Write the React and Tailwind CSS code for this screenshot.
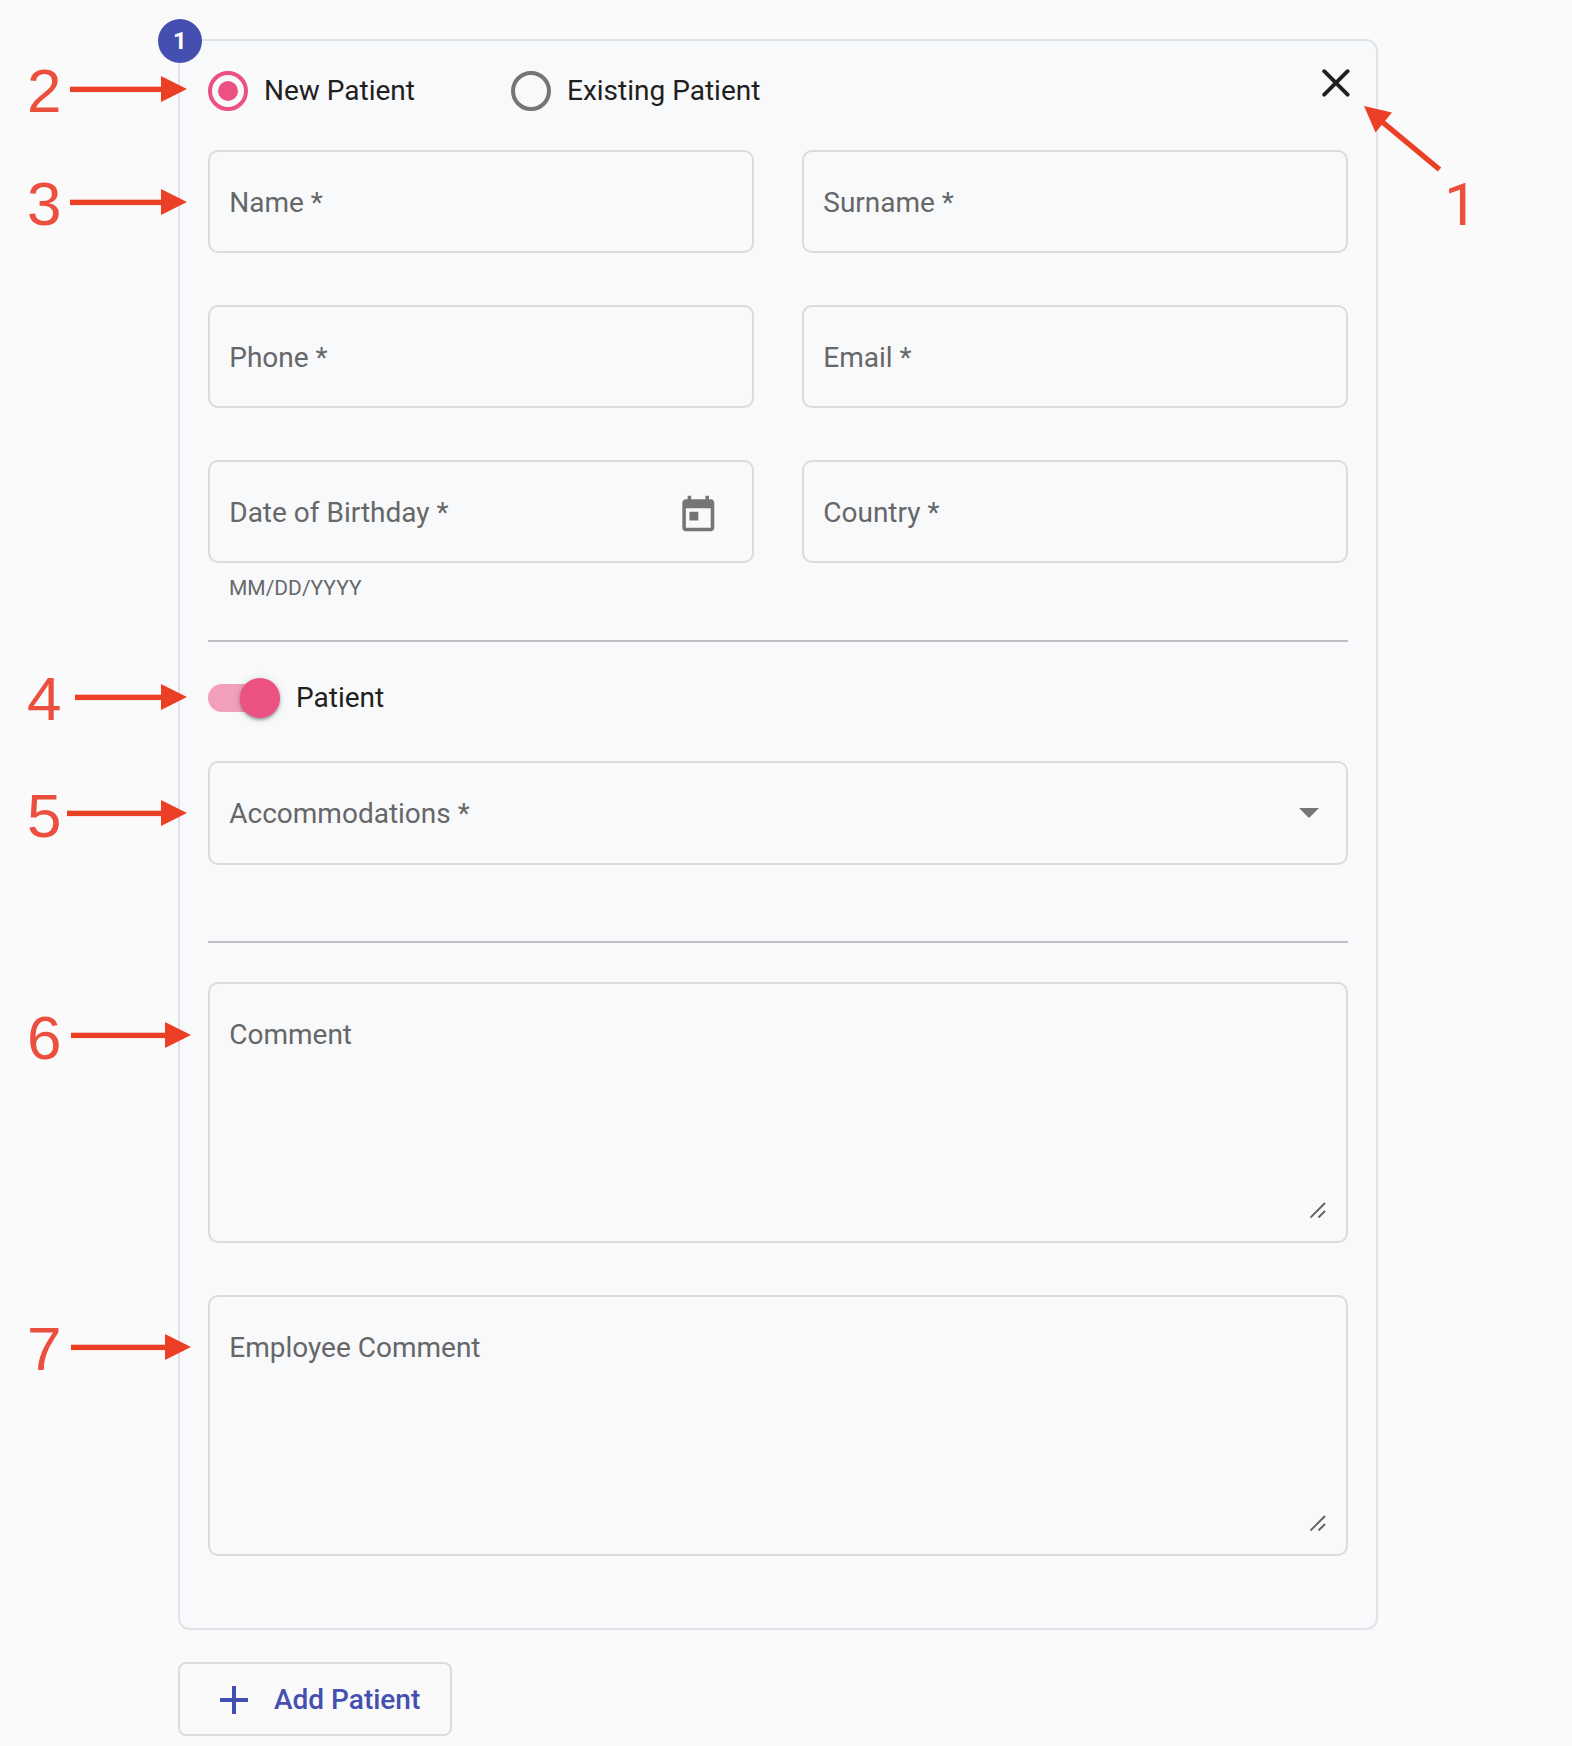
const Divider = ({ className }) => <div className={`h-[2px] bg-[#bfc0c3] ${className}`} />;

function Field({ label, children, className = 'h-[103px] pt-[2px]' }) {
  return (
    <div className={`flex items-center justify-between rounded-[10px] border-2 border-[#dadbdd] pl-[19.25px] text-[#666768] ${className}`}>
      <span className="pt-px leading-8">{label}</span>
      {children}
    </div>
  );
}

function TextArea({ label, className }) {
  return (
    <div className={`flex h-[261px] flex-col justify-between rounded-[10px] border-2 border-[#dadbdd] pl-[19.25px] pr-5 pt-[35px] pb-[23px] text-[#666768] ${className}`}>
      <span className="leading-8">{label}</span>
      <svg className="h-4 w-4 self-end" viewBox="0 0 16 16" fill="none" stroke="#5f6061" strokeWidth="1.9">
        <path d="M0.5 15.5 15 1M8.5 15.5 15 9" />
      </svg>
    </div>
  );
}

const markers = [
  { n: 2, base: 112, y: 89, from: 70, tip: 187 },
  { n: 3, base: 225, y: 202, from: 70, tip: 187 },
  { n: 4, base: 720, y: 697, from: 75, tip: 187 },
  { n: 5, base: 837, y: 813, from: 67, tip: 187 },
  { n: 6, base: 1059, y: 1035, from: 71, tip: 191 },
  { n: 7, base: 1370, y: 1347, from: 71, tip: 191 },
];

function Marker({ n, base, y, from, tip }) {
  return (
    <>
      <span
        className="absolute left-[27px] font-['Liberation_Sans',sans-serif] text-[62px] leading-[62px] text-[#ed4f3f]"
        style={{ top: base - 52.5 }}
      >
        {n}
      </span>
      <svg className="absolute h-7" style={{ left: from, top: y - 14, width: tip - from }} fill="#eb4026">
        <rect y="11.7" width={tip - from - 24} height="5.4" />
        <path d={`M${tip - from - 26} 1 L${tip - from} 14 L${tip - from - 26} 27 Z`} />
      </svg>
    </>
  );
}

export default function App() {
  return (
    <main className="relative h-[1746px] w-[1572px] overflow-hidden bg-[#fafafa] pl-[178px] pt-[39px] font-['Roboto',sans-serif] text-[28px] text-[#1f2020]">
      <section className="relative h-[1591px] w-[1200px] rounded-xl border-2 border-[#dfe2e8] bg-[#f8f9fb] px-7 pt-[30px]">
        <div className="absolute -left-[22px] -top-[22px] flex h-11 w-11 items-center justify-center rounded-full bg-[#444fb0] pb-px text-[24px] font-bold leading-none text-white">
          1
        </div>

        <div className="flex h-10 items-center">
          <div className="flex w-[303px] items-center">
            <span className="flex h-10 w-10 items-center justify-center rounded-full border-4 border-[#ec5281]">
              <span className="h-5 w-5 rounded-full bg-[#ec5281]" />
            </span>
            <span className="ml-4 leading-8">New Patient</span>
          </div>
          <span className="h-10 w-10 rounded-full border-4 border-[#757576]" />
          <span className="ml-4 leading-8">Existing Patient</span>
          <svg className="-mr-[2px] -mt-[2px] ml-auto h-7 w-7 self-start" viewBox="0 0 28 28" fill="none" stroke="#1f2020" strokeWidth="3.9" strokeLinecap="round">
            <path d="M2.2 2.2 25.6 25.6M25.6 2.2 2.2 25.6" />
          </svg>
        </div>

        <div className="mt-[39px] grid grid-cols-2 gap-x-12 gap-y-[52px]">
          <Field label="Name *" />
          <Field label="Surname *" />
          <Field label="Phone *" />
          <Field label="Email *" />
          <Field label="Date of Birthday *">
            <svg className="mr-8 mt-[5px] h-[42.6px] w-[42.6px]" viewBox="0 0 24 24" fill="#757576">
              <path d="M19 3h-1V1h-2v2H8V1H6v2H5c-1.11 0-1.99.9-1.99 2L3 19c0 1.1.89 2 2 2h14c1.1 0 2-.9 2-2V5c0-1.1-.9-2-2-2zm0 16H5V8h14v11zM7 10h5v5H7z" />
            </svg>
          </Field>
          <Field label="Country *" />
        </div>
        <p className="mt-[13px] pl-[21px] text-[21px] leading-6 text-[#666768]">MM/DD/YYYY</p>

        <Divider className="mt-10" />

        <div className="mt-9 flex h-10 items-center">
          <span className="flex h-7 w-[72px] items-center justify-end rounded-full bg-[linear-gradient(to_right,#f2a0ba_60px,transparent_60px)]">
            <span className="h-10 w-10 shrink-0 rounded-full bg-[#ec5281] shadow-[0_2px_3px_rgba(0,0,0,0.3),0_1px_8px_rgba(0,0,0,0.14)]" />
          </span>
          <span className="ml-4 leading-8">Patient</span>
        </div>

        <Field label="Accommodations *" className="mt-[43px] h-[104px]">
          <svg className="mr-[27px] h-[10px] w-5" viewBox="0 0 20 10" fill="#757576">
            <path d="M0 0h20L10 10z" />
          </svg>
        </Field>

        <Divider className="mt-[76px]" />

        <TextArea label="Comment" className="mt-[39px]" />
        <TextArea label="Employee Comment" className="mt-[52px]" />
      </section>

      <button className="mt-8 flex h-[74px] w-[274px] items-center rounded-lg border-2 border-[#dcdcdc] pl-10 font-medium text-[#444fb0]">
        <svg className="mt-[2px] h-7 w-7" viewBox="0 0 28 28" fill="#444fb0">
          <path d="M12 0h4v12h12v4H16v12h-4V16H0v-4h12z" />
        </svg>
        <span className="ml-[26px] pt-[2px] leading-8">Add Patient</span>
      </button>

      {markers.map((m) => (
        <Marker key={m.n} {...m} />
      ))}
      <svg className="absolute left-[1360px] top-[100px] h-[74px] w-[84px]" viewBox="0 0 84 74">
        <path d="M20 20 79.5 69.5" stroke="#eb4026" strokeWidth="5.4" />
        <path d="M4 6 32 12.5 15.5 32.5Z" fill="#eb4026" />
      </svg>
      <span className="absolute left-[1444px] top-[175px] text-[60px] leading-[60px] text-[#ed4f3f]">1</span>
    </main>
  );
}
